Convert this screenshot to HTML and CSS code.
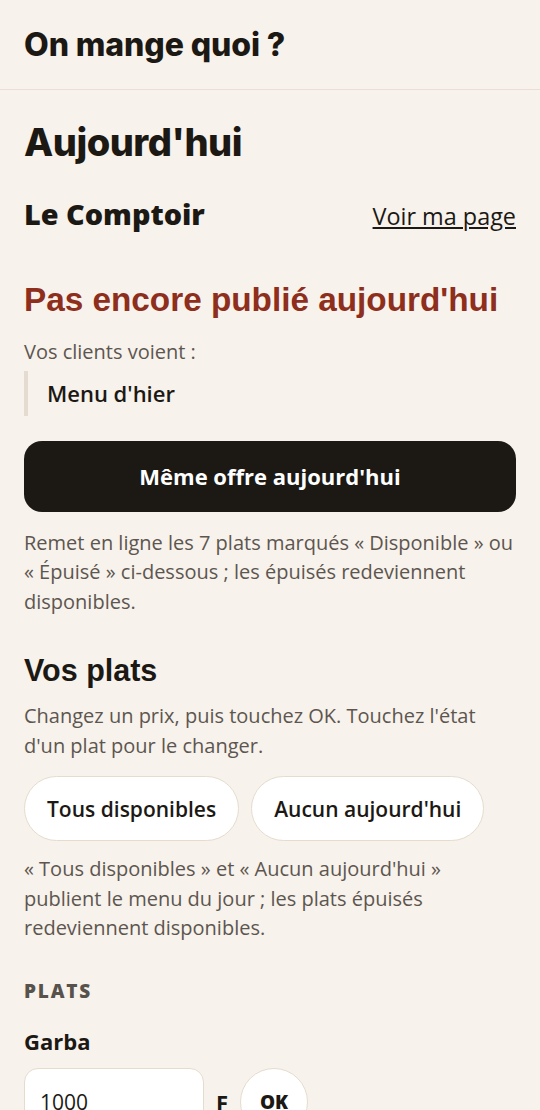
FILE: index.html
```html
<!DOCTYPE html>
<html lang="fr">
  <head>
    <meta charset="UTF-8" />
    <meta name="viewport" content="width=device-width, initial-scale=1.0" />
    <title>On mange quoi ?</title>
    <link rel="stylesheet" href="styles.css">
  </head>
  <body>
    <header class="top-bar">
      <div class="brand">On mange quoi&nbsp;?</div>
    </header>
    <main class="page">
      <h1 class="page-title">Aujourd'hui</h1>
      <div class="resto-row">
        <div class="resto-name">Le Comptoir</div>
        <a href="#" class="resto-link">Voir ma page</a>
      </div>

      <section class="status">
        <h2 class="status-title">Pas encore publié aujourd'hui</h2>
        <p class="muted">Vos clients voient&nbsp;:</p>
        <div class="current-menu">Menu d'hier</div>
        <button class="btn-primary">Même offre aujourd'hui</button>
        <p class="muted note">Remet en ligne les 7 plats marqués «&nbsp;Disponible&nbsp;» ou «&nbsp;Épuisé&nbsp;» ci-dessous&nbsp;; les épuisés redeviennent disponibles.</p>
      </section>

      <section class="dishes">
        <h2 class="section-title">Vos plats</h2>
        <p class="muted hint">Changez un prix, puis touchez OK. Touchez l'état d'un plat pour le changer.</p>
        <div class="pill-row">
          <button class="pill">Tous disponibles</button>
          <button class="pill">Aucun aujourd'hui</button>
        </div>
        <p class="muted hint after-pills">«&nbsp;Tous disponibles&nbsp;» et «&nbsp;Aucun aujourd'hui&nbsp;» publient le menu du jour&nbsp;; les plats épuisés redeviennent disponibles.</p>

        <h3 class="group-label">PLATS</h3>
        <div class="dish">
          <div class="dish-name">Garba</div>
          <div class="price-row">
            <input class="price-input" type="text" value="1000" />
            <span class="currency">F</span>
            <button class="ok-btn">OK</button>
          </div>
        </div>
      </section>
    </main>
  </body>
</html>
```

FILE: styles.css
```css
body {
  font-family: "Open Sans", "Noto Sans", sans-serif;
  background-color: #f7f2eb;
  color: #1c1915;
  margin: 0;
  padding: 0;
}
button,
input {
  font-family: inherit;
  color: inherit;
}
.top-bar {
  height: 89px;
  display: flex;
  align-items: center;
  padding: 0 24px;
  border-bottom: 1px solid #ecdcd5;
}
.brand {
  font-family: "Inter", sans-serif;
  font-size: 32px;
  font-weight: 800;
  letter-spacing: -0.1px;
}
.page {
  padding: 29px 24px 40px;
}
.page-title {
  font-family: "Inter", sans-serif;
  font-size: 38px;
  font-weight: 800;
  letter-spacing: -0.5px;
  line-height: 46px;
  margin: 0 0 31px;
}
.resto-row {
  display: flex;
  justify-content: space-between;
  align-items: baseline;
  line-height: 36px;
}
.resto-name {
  font-size: 28.8px;
  font-weight: 800;
}
.resto-link {
  font-size: 23.4px;
  color: #1c1915;
}
.status {
  margin-top: 46px;
}
.status-title {
  font-family: "Liberation Sans", Arial, sans-serif;
  font-size: 33.3px;
  line-height: 40px;
  font-weight: bold;
  color: #8e2e1c;
  margin: 0 0 17px;
}
.muted {
  font-size: 20px;
  line-height: 29.5px;
  color: #5d5650;
  margin: 0;
}
.current-menu {
  margin: 4px 0 25px;
  padding: 6px 0 6px 19px;
  border-left: 4px solid #e4dcd0;
  font-size: 22px;
  font-weight: 600;
  line-height: 33px;
}
.btn-primary {
  display: block;
  width: 100%;
  height: 71px;
  border: none;
  border-radius: 18px;
  background: #1c1915;
  color: white;
  font-size: 22px;
  font-weight: bold;
  cursor: pointer;
}
.note {
  margin-top: 16px;
}
.dishes {
  margin-top: 36px;
}
.section-title {
  font-family: "Liberation Sans", Arial, sans-serif;
  font-size: 30.5px;
  line-height: 36px;
  font-weight: bold;
  margin: 0 0 13px;
}
.hint {
  max-width: 460px;
}
.pill-row {
  display: flex;
  gap: 12px;
  margin-top: 16px;
}
.pill {
  height: 65px;
  padding: 0 22px;
  background: white;
  border: 1px solid #e6dcce;
  border-radius: 33px;
  font-size: 21px;
  font-weight: 600;
  cursor: pointer;
}
.after-pills {
  margin-top: 13px;
}
.group-label {
  font-size: 19px;
  line-height: 24px;
  font-weight: 800;
  letter-spacing: 1.8px;
  color: #57524c;
  margin: 36px 0 24px;
}
.dish-name {
  font-size: 22px;
  line-height: 28px;
  font-weight: bold;
  margin-bottom: 13px;
}
.price-row {
  display: flex;
  align-items: center;
  gap: 12px;
}
.price-input {
  box-sizing: border-box;
  width: 180px;
  height: 68px;
  padding: 0 15px;
  border: 1px solid #e6dcce;
  border-radius: 14px;
  background: white;
  font-size: 21px;
}
.currency {
  font-size: 22px;
  font-weight: bold;
}
.ok-btn {
  width: 68px;
  height: 68px;
  border-radius: 50%;
  border: 1px solid #e6dcce;
  background: white;
  font-size: 19px;
  font-weight: 800;
}
```
